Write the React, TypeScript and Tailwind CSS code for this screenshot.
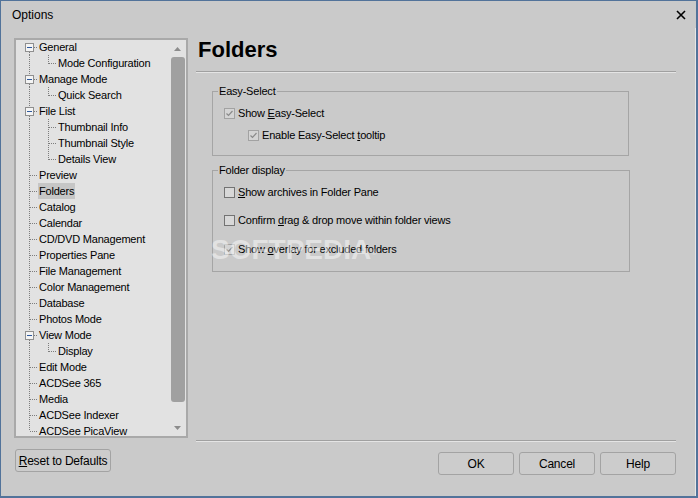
import type { ReactNode } from 'react';

// Options dialog: tree of pages on the left, the "Folders" page on the right

type TreeRow = {
  label: string;
  level: 0 | 1;
  expander?: boolean;
  lastChild?: boolean;
  selected?: boolean;
};

const treeRows: TreeRow[] = [
  { label: 'General', level: 0, expander: true },
  { label: 'Mode Configuration', level: 1, lastChild: true },
  { label: 'Manage Mode', level: 0, expander: true },
  { label: 'Quick Search', level: 1, lastChild: true },
  { label: 'File List', level: 0, expander: true },
  { label: 'Thumbnail Info', level: 1 },
  { label: 'Thumbnail Style', level: 1 },
  { label: 'Details View', level: 1, lastChild: true },
  { label: 'Preview', level: 0 },
  { label: 'Folders', level: 0, selected: true },
  { label: 'Catalog', level: 0 },
  { label: 'Calendar', level: 0 },
  { label: 'CD/DVD Management', level: 0 },
  { label: 'Properties Pane', level: 0 },
  { label: 'File Management', level: 0 },
  { label: 'Color Management', level: 0 },
  { label: 'Database', level: 0 },
  { label: 'Photos Mode', level: 0 },
  { label: 'View Mode', level: 0, expander: true },
  { label: 'Display', level: 1, lastChild: true },
  { label: 'Edit Mode', level: 0 },
  { label: 'ACDSee 365', level: 0 },
  { label: 'Media', level: 0 },
  { label: 'ACDSee Indexer', level: 0 },
  { label: 'ACDSee PicaView', level: 0 },
];

const DOT = { stroke: '#7d7d7d', strokeWidth: 1, strokeDasharray: '1 1' };

function TreeGutter({ row, first, last }: { row: TreeRow; first: boolean; last: boolean }) {
  const width = row.level === 1 ? 41 : 22;
  return (
    <svg width={width} height={16} shapeRendering="crispEdges" className="shrink-0">
      {/* root vertical line */}
      {row.level === 1 && <line x1={13.5} y1={0} x2={13.5} y2={16} {...DOT} />}
      {row.level === 0 && row.expander && (
        <>
          {!first && <line x1={13.5} y1={0} x2={13.5} y2={4} {...DOT} />}
          {!last && <line x1={13.5} y1={13} x2={13.5} y2={16} {...DOT} />}
        </>
      )}
      {row.level === 0 && !row.expander && (
        <line x1={13.5} y1={0} x2={13.5} y2={last ? 8 : 16} {...DOT} />
      )}
      {row.level === 0 && (
        <line x1={row.expander ? 18 : 14} y1={8.5} x2={22} y2={8.5} {...DOT} />
      )}
      {row.level === 1 && (
        <>
          <line x1={32.5} y1={0} x2={32.5} y2={row.lastChild ? 9 : 16} {...DOT} />
          <line x1={33} y1={8.5} x2={41} y2={8.5} {...DOT} />
        </>
      )}
      {row.expander && (
        <>
          <rect x={9.5} y={4.5} width={8} height={8} fill="#f4f4f4" stroke="#8f8f8f" />
          <line x1={11} y1={8.5} x2={16} y2={8.5} stroke="#2f5a9e" strokeWidth={1} />
        </>
      )}
    </svg>
  );
}

function Checkbox({ checked }: { checked?: boolean }) {
  return (
    <span
      className={
        checked
          ? 'flex h-[11px] w-[11px] shrink-0 items-center justify-center border border-[#a2a2a2] bg-[#d4d4d4]'
          : 'flex h-[11px] w-[11px] shrink-0 items-center justify-center border border-[#737373] bg-[#d8d8d8]'
      }
    >
      {checked && (
        <svg width={9} height={9} viewBox="0 0 9 9">
          <polyline points="1.5,4.5 3.5,6.5 7.5,2" fill="none" stroke="#8a8a8a" strokeWidth={1.2} />
        </svg>
      )}
    </span>
  );
}

function CheckRow({ checked, children, indent, className }: { checked?: boolean; children: ReactNode; indent?: boolean; className?: string }) {
  return (
    <div
      className={`flex h-[16px] items-center gap-[3px] ${indent ? 'pl-[35px]' : 'pl-[11px]'} ${className ?? ''}`}
    >
      <Checkbox checked={checked} />
      <span>{children}</span>
    </div>
  );
}

function DialogButton({ children, className }: { children: ReactNode; className?: string }) {
  return (
    <button
      className={`flex h-[23px] items-center justify-center rounded-[3px] border border-[#a3a3a3] bg-[#cccccc] text-[12px] text-black ${className ?? ''}`}
    >
      {children}
    </button>
  );
}

export default function App() {
  return (
    <div className="flex h-[498px] w-[698px] flex-col overflow-hidden border-t border-l border-r-2 border-b-2 border-[#52739a] bg-[#cacaca] font-['Liberation_Sans',Arial,sans-serif] text-[11px] tracking-[-0.2px] text-black">
      {/* Title bar */}
      <div className="flex h-[27px] shrink-0 items-center justify-between pl-[11px] pr-[10px]">
        <span className="text-[12px] tracking-normal">Options</span>
        <svg width={10} height={10} viewBox="0 0 10 10">
          <path d="M1 1 L9 9 M9 1 L1 9" stroke="#000" strokeWidth={1.6} />
        </svg>
      </div>

      {/* Body */}
      <div className="flex min-h-0 flex-1 border-r border-[#e6e6e6]">
        {/* Left: tree + reset */}
        <div className="flex w-[187px] shrink-0 flex-col pl-[13px] pt-[10px]">
          <div className="flex h-[400px] w-[174px] overflow-hidden border-2 border-[#a9a9a9] bg-[#e2e2e2]">
            <div className="-mt-[1px] flex-1 overflow-hidden">
              {treeRows.map((row, i) => (
                <div key={row.label} className="flex h-[16px] items-center whitespace-nowrap">
                  <TreeGutter row={row} first={i === 0} last={i === treeRows.length - 1} />
                  <span className={row.selected ? 'bg-[#c6c6c6] px-[1px] leading-[16px]' : 'px-[1px] leading-[16px]'}>
                    {row.label}
                  </span>
                </div>
              ))}
            </div>
            {/* Scrollbar */}
            <div className="flex w-[17px] shrink-0 flex-col items-center">
              <div className="flex h-[17px] items-center justify-center">
                <svg width={7} height={4} viewBox="0 0 7 4">
                  <path d="M0 4 L3.5 0 L7 4 Z" fill="#8c8c8c" />
                </svg>
              </div>
              <div className="h-[345px] w-[14px] rounded-[3px] bg-[#a0a0a0]" />
              <div className="flex flex-1 items-end justify-center pb-[6px]">
                <svg width={7} height={4} viewBox="0 0 7 4">
                  <path d="M0 0 L7 0 L3.5 4 Z" fill="#8c8c8c" />
                </svg>
              </div>
            </div>
          </div>
          <DialogButton className="mt-[11px] ml-[1px] w-[96px]">
            <span>
              <u>R</u>eset to Defaults
            </span>
          </DialogButton>
        </div>

        {/* Right: page content */}
        <div className="relative ml-[8px] flex w-[480px] shrink-0 flex-col pt-[9px]">
          <h1 className="pl-[2px] text-[22px] font-bold leading-[26px] tracking-normal">Folders</h1>
          <div className="mt-[8px] h-[2px] border-t border-b border-t-[#a0a0a0] border-b-[#e4e4e4]" />

          <fieldset className="mt-[11px] ml-[16px] w-[417px] border border-[#a5a5a5] pb-[12px]">
            <legend className="ml-[5px] px-[1px] leading-[14px]">Easy-Select</legend>
            <div className="flex flex-col gap-[6px] pt-[7px]">
              <CheckRow checked>
                Show <u>E</u>asy-Select
              </CheckRow>
              <CheckRow checked indent>
                Enable Easy-Select <u>t</u>ooltip
              </CheckRow>
            </div>
          </fieldset>

          <fieldset className="mt-[7px] ml-[16px] w-[418px] border border-[#a5a5a5] pb-[14px]">
            <legend className="ml-[5px] px-[1px] leading-[14px]">Folder display</legend>
            <div className="flex flex-col gap-[12px] pt-[7px]">
              <CheckRow>
                <u>S</u>how archives in Folder Pane
              </CheckRow>
              <CheckRow>
                Confirm <u>d</u>rag &amp; drop move within folder views
              </CheckRow>
              <CheckRow checked className="mt-[1px]">
                Show <u>o</u>verlay for excluded folders
              </CheckRow>
            </div>
          </fieldset>

          {/* watermark overlay */}
          <div className="pointer-events-none absolute left-[15px] top-[208px] text-[28px] leading-none font-bold tracking-[0px] text-white opacity-45">
            SOFTPEDIA<sup className="text-[8px]">®</sup>
          </div>

          <div className="mt-auto h-[2px] border-t border-b border-t-[#a0a0a0] border-b-[#e4e4e4]" />
          <div className="mt-[10px] mb-[21px] flex justify-end gap-[5px]">
            <DialogButton className="w-[76px]">OK</DialogButton>
            <DialogButton className="w-[76px]">Cancel</DialogButton>
            <DialogButton className="w-[76px]">Help</DialogButton>
          </div>
        </div>
      </div>
    </div>
  );
}
